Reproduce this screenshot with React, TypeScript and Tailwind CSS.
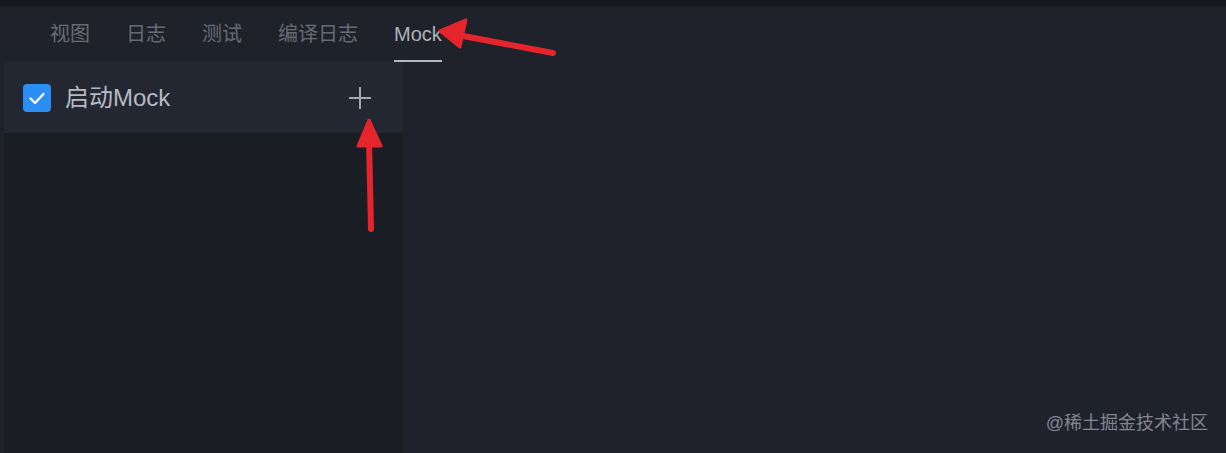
const tabs = ['视图', '日志', '测试', '编译日志']

function Arrows() {
  return (
    <svg className="pointer-events-none absolute inset-0" width="1226" height="453" viewBox="0 0 1226 453">
      <g fill="#e5242b" stroke="#e5242b" strokeLinecap="round" strokeLinejoin="round">
        <line x1="553" y1="53" x2="458" y2="35" strokeWidth="6" />
        <polygon points="440,31 466,20 460,47" strokeWidth="3" />
        <line x1="371" y1="229" x2="369" y2="140" strokeWidth="6" />
        <polygon points="369,120 358,146 381,146" strokeWidth="3" />
      </g>
    </svg>
  )
}

export default function App() {
  return (
    <div
      className="relative flex h-[453px] w-[1226px] flex-col overflow-hidden bg-[#1f222b]"
      style={{ fontFamily: '"Liberation Sans", "Noto Sans CJK SC", sans-serif' }}
    >
      <div className="h-[7px] shrink-0 bg-[#16181d]" />
      <div className="flex h-[55px] shrink-0 items-stretch gap-[36px] pl-[50px]">
        {tabs.map(t => (
          <div key={t} className="flex items-center pb-[2px] text-[20px] text-[#676b74]">
            {t}
          </div>
        ))}
        <div className="relative flex items-center pb-[2px] text-[20px] font-medium text-[#aeb2ba]">
          Mock
          <div className="absolute bottom-0 left-0 right-0 h-[2px] bg-[#b4b8c0]" />
        </div>
      </div>
      <div className="flex flex-1 pl-[4px]">
        <div className="flex w-[399px] flex-col bg-[#1b1d25]">
          <div className="flex h-[71px] items-center bg-[#232732] pl-[19px] pr-[31px]">
            <div className="flex h-[28px] w-[28px] items-center justify-center rounded-[4px] bg-[#2b8ef5]">
              <svg width="22" height="22" viewBox="0 0 22 22" fill="none">
                <path d="M4.5 11.5l4.5 4.5 8.5-9" stroke="#fff" strokeWidth="2.4" strokeLinecap="round" strokeLinejoin="round" />
              </svg>
            </div>
            <span className="ml-[14px] text-[24px] text-[#b6bac2]">启动Mock</span>
            <svg className="ml-auto" width="24" height="24" viewBox="0 0 24 24" fill="none">
              <path d="M12 1v22M1 12h22" stroke="#a3a7ae" strokeWidth="2" />
            </svg>
          </div>
        </div>
        <div className="relative flex-1 bg-[#1f222c]">
          <div className="absolute bottom-[16px] right-[18px] text-[18px] text-[#83868e]">@稀土掘金技术社区</div>
        </div>
      </div>
      <Arrows />
    </div>
  )
}
